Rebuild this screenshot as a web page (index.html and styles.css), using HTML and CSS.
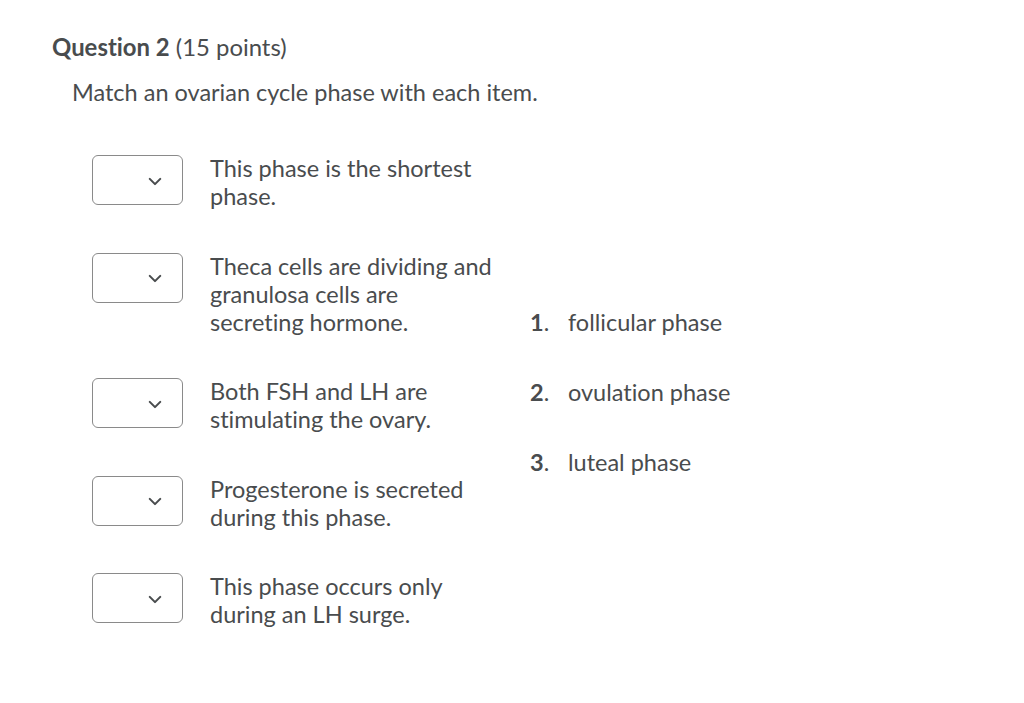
FILE: index.html
```html
<!DOCTYPE html>
<html>
<head>
<meta charset="utf-8">
<link rel="stylesheet" href="styles.css">
</head>
<body>
<div class="question">
  <h2 class="q-title"><strong>Question 2</strong> (15 points)</h2>
  <p class="q-text">Match an ovarian cycle phase with each item.</p>
  <div class="match">
    <div class="items">
      <div class="item">
        <div class="select"><svg viewBox="0 0 16 10" width="14" height="9"><path d="M2 2 L8 8 L14 2" fill="none" stroke="#494c4e" stroke-width="2.4" stroke-linecap="round" stroke-linejoin="round"/></svg></div>
        <div class="item-text">This phase is the shortest phase.</div>
      </div>
      <div class="item">
        <div class="select"><svg viewBox="0 0 16 10" width="14" height="9"><path d="M2 2 L8 8 L14 2" fill="none" stroke="#494c4e" stroke-width="2.4" stroke-linecap="round" stroke-linejoin="round"/></svg></div>
        <div class="item-text">Theca cells are dividing and granulosa cells are secreting hormone.</div>
      </div>
      <div class="item">
        <div class="select"><svg viewBox="0 0 16 10" width="14" height="9"><path d="M2 2 L8 8 L14 2" fill="none" stroke="#494c4e" stroke-width="2.4" stroke-linecap="round" stroke-linejoin="round"/></svg></div>
        <div class="item-text">Both FSH and LH are stimulating the ovary.</div>
      </div>
      <div class="item">
        <div class="select"><svg viewBox="0 0 16 10" width="14" height="9"><path d="M2 2 L8 8 L14 2" fill="none" stroke="#494c4e" stroke-width="2.4" stroke-linecap="round" stroke-linejoin="round"/></svg></div>
        <div class="item-text">Progesterone is secreted during this phase.</div>
      </div>
      <div class="item">
        <div class="select"><svg viewBox="0 0 16 10" width="14" height="9"><path d="M2 2 L8 8 L14 2" fill="none" stroke="#494c4e" stroke-width="2.4" stroke-linecap="round" stroke-linejoin="round"/></svg></div>
        <div class="item-text">This phase occurs only during an LH surge.</div>
      </div>
    </div>
    <ol class="choices">
      <li class="choice"><span class="num">1<span class="dot">.</span></span><span class="choice-text">follicular phase</span></li>
      <li class="choice"><span class="num">2<span class="dot">.</span></span><span class="choice-text">ovulation phase</span></li>
      <li class="choice"><span class="num">3<span class="dot">.</span></span><span class="choice-text">luteal phase</span></li>
    </ol>
  </div>
</div>
</body>
</html>
```
FILE: styles.css
```css
html, body {
  margin: 0;
  padding: 0;
  background: #ffffff;
}
body {
  font-family: Lato, "Noto Sans", sans-serif;
  color: #494c4e;
  font-variant-ligatures: none;
}
.question {
  padding: 33px 0 0 52px;
}
.q-title {
  margin: 0;
  font-size: 23.9px;
  line-height: 28px;
  font-weight: 400;
}
.q-title strong {
  font-weight: 700;
}
.q-text {
  margin: 17px 0 0 20px;
  font-size: 23.5px;
  line-height: 28px;
}
.match {
  display: flex;
  align-items: center;
  margin: 49px 0 0 40px;
}
.items {
  display: flex;
  flex-direction: column;
  gap: 42.6px;
  width: 438px;
}
.item {
  display: flex;
  align-items: flex-start;
  gap: 27px;
}
.select {
  box-sizing: border-box;
  width: 91px;
  height: 50px;
  border: 1px solid #8a8a8a;
  border-radius: 6px;
  display: flex;
  align-items: center;
  justify-content: flex-end;
  padding-right: 20px;
  flex: none;
}
.select svg {
  display: block;
  margin-top: 2px;
}
.item-text {
  width: 285px;
  font-size: 23.5px;
  line-height: 28px;
  margin-top: -1px;
}
.choices {
  list-style: none;
  margin: 0;
  padding: 0;
  display: flex;
  flex-direction: column;
  gap: 42px;
}
.choice {
  display: flex;
  align-items: baseline;
  font-size: 23.5px;
  line-height: 28px;
}
.num {
  width: 38px;
  font-weight: 700;
  font-size: 23.5px;
  line-height: 28px;
}
.dot {
  font-weight: 400;
}
```
